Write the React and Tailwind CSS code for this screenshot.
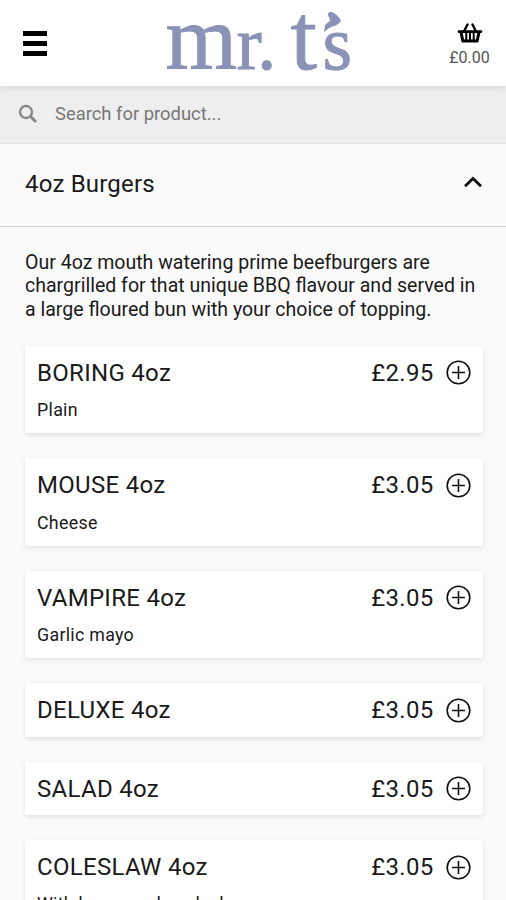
import React, { useState } from 'react';

const products = [
  { id: 1, name: 'BORING 4oz', description: 'Plain', price: 2.95 },
  { id: 2, name: 'MOUSE 4oz', description: 'Cheese', price: 3.05 },
  { id: 3, name: 'VAMPIRE 4oz', description: 'Garlic mayo', price: 3.05 },
  { id: 4, name: 'DELUXE 4oz', price: 3.05 },
  { id: 5, name: 'SALAD 4oz', price: 3.05 },
  { id: 6, name: 'COLESLAW 4oz', description: 'With homemade coleslaw', price: 3.05 },
];

const Logo = () => (
  <svg width="190" height="86" viewBox="163 0 190 86" overflow="visible" role="img" aria-label="mr. t's">
    <text y="69" fill="#8b92b8" stroke="#8b92b8" strokeWidth="0.9" className="font-['Liberation_Serif',serif]">
      <tspan x="165.5" fontSize="92">m</tspan>
      <tspan x="236.5" fontSize="76">r</tspan>
      <tspan x="257" fontSize="78">.</tspan>
      <tspan x="290.5" fontSize="95">t</tspan>
      <tspan x="322.5" fontSize="76">s</tspan>
    </text>
    {/* apostrophe */}
    <path d="M324 32.3 L325 25.5 Q326.5 22.5 330 21 Q330 18.5 327.7 14.5 Q328.5 11.5 331 11.8 Q338.5 14.5 341 21 Q338.5 24.5 335 25.7 Q328 27.5 324 32.3Z" fill="#8b92b8" />
  </svg>
);

const Header = ({ total }) => (
  <header className="relative z-10 flex h-[86px] shrink-0 items-center bg-white shadow-[0_1px_8px_rgba(0,0,0,0.12)]">
    <button aria-label="Menu" className="flex w-[163px] flex-col gap-[5px] pl-[23px]">
      <span className="h-[5px] w-6 bg-black" />
      <span className="h-[5px] w-6 bg-black" />
      <span className="h-[5px] w-6 bg-black" />
    </button>
    <Logo />
    <button aria-label="Basket" className="ml-auto flex w-[86px] flex-col items-center pt-[5px] pl-[13px]">
      <svg width="26" height="20" viewBox="0 0 26 20" fill="none" stroke="#000">
        <path d="M7 8.5 L10.5 1.5 M19 8.5 L15.5 1.5" strokeWidth="2.4" strokeLinecap="round" />
        <path d="M2 8.6 H24" strokeWidth="2.6" strokeLinecap="round" />
        <path d="M4 9 L5.8 18 H20.2 L22 9" strokeWidth="3" strokeLinejoin="round" />
        <path d="M9.3 9 V18 M13 9 V18 M16.7 9 V18" strokeWidth="2" />
      </svg>
      <span className="mt-1 text-base leading-[22px] text-[#555]">£{total.toFixed(2)}</span>
    </button>
  </header>
);

const SearchBar = () => {
  const [query, setQuery] = useState('');

  return (
    <div className="flex h-[58px] shrink-0 items-center border-b border-[#e6e6e6] bg-[#eee] pl-[18px]">
      <svg width="20" height="20" viewBox="0 0 20 20" fill="none" stroke="#888" className="mb-0.5">
        <circle cx="8" cy="8" r="6" strokeWidth="2.4" />
        <path d="M12.3 12.3 L18 18" strokeWidth="3" />
      </svg>
      <input
        value={query}
        onChange={(e) => setQuery(e.target.value)}
        placeholder="Search for product..."
        className="ml-[17px] w-80 bg-transparent pb-px text-[18.4px] outline-none placeholder:text-[#777]"
      />
    </div>
  );
};

const ProductCard = ({ product, onAdd }) => (
  <li className="rounded-[2px] bg-white px-3 pt-3 pb-[11.4px] shadow-[0_2px_5px_rgba(0,0,0,0.1)]">
    <div className="flex h-[30px] items-center">
      <h3 className="flex-1 text-[24px] tracking-[0.3px]">{product.name}</h3>
      <span className="text-[24px] tracking-[0.3px]">£{product.price.toFixed(2)}</span>
      <button aria-label={`Add ${product.name}`} onClick={() => onAdd(product)} className="ml-3">
        <svg width="25" height="25" viewBox="0 0 25 25" fill="none" stroke="#111">
          <circle cx="12.5" cy="12.5" r="11.3" strokeWidth="1.6" />
          <path d="M6 12.5 H19 M12.5 6 V19" strokeWidth="1.6" />
        </svg>
      </button>
    </div>
    {product.description && (
      <p className="mt-[11.4px] mb-[0.7px] h-[22px] text-[17.8px] leading-[22px] tracking-[0.3px]">{product.description}</p>
    )}
  </li>
);

const App = () => {
  const [open, setOpen] = useState(true);
  const [total, setTotal] = useState(0);

  return (
    <div className="flex h-screen flex-col overflow-hidden bg-[#fafafa] font-[Roboto,sans-serif] text-[#1a1a1a]">
      <Header total={total} />
      <SearchBar />

      <button
        onClick={() => setOpen(!open)}
        className="flex h-[83px] shrink-0 items-center justify-between border-b border-[#cfcfcf] pr-[23px] pl-[25px]"
      >
        <h2 className="pb-0.5 text-[24px] tracking-[0.2px]">4oz Burgers</h2>
        <svg width="20" height="12" viewBox="0 0 20 12" className={open ? 'mb-1.5' : 'mt-1.5 rotate-180'} fill="none" stroke="#111">
          <path d="M2 10.2 L10 2.4 L18 10.2" strokeWidth="2.8" />
        </svg>
      </button>

      {open && (
        <section className="pt-6 pr-[23.5px] pl-[25px]">
          <p className="text-[19.55px] leading-[23.3px] whitespace-nowrap">
            Our 4oz mouth watering prime beefburgers are
            <br />
            chargrilled for that unique BBQ flavour and served in
            <br />
            a large floured bun with your choice of topping.
          </p>
          <ul className="mt-[25px] flex flex-col gap-[25px]">
            {products.map((product) => (
              <ProductCard key={product.id} product={product} onAdd={(p) => setTotal(total + p.price)} />
            ))}
          </ul>
        </section>
      )}
    </div>
  );
};

export default App;
